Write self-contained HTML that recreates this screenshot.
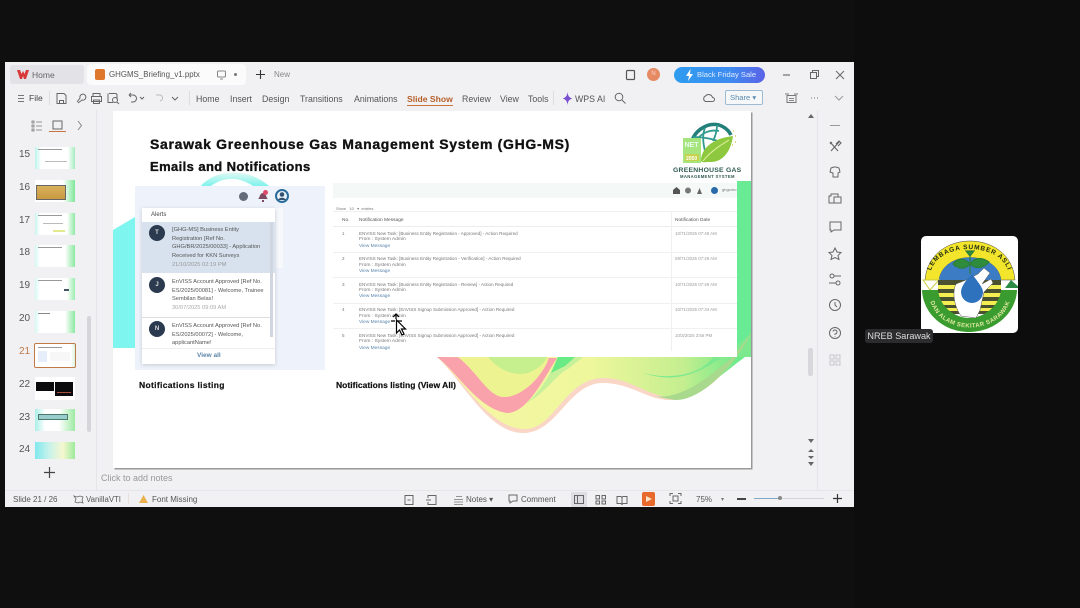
<!DOCTYPE html>
<html><head><meta charset="utf-8"><style>
html,body{margin:0;padding:0;background:#0f0f10;width:1080px;height:608px;overflow:hidden}
body{font-family:"Liberation Sans",sans-serif;position:relative}
div{position:absolute;white-space:nowrap}
svg{position:absolute;overflow:visible}
#root{left:0;top:0;width:1080px;height:608px;filter:blur(.35px)}
.t{font-size:9.5px;color:#555;line-height:12px}
.m{font-size:9px;color:#444;line-height:12px}
.n{font-size:10px;color:#555;line-height:12px}
.b{font-size:8.8px;color:#555;line-height:12px}
.tx{font-size:4.55px;color:#777;line-height:6px}
.fr{font-size:4.9px;color:#777;line-height:6px}
.lnk{font-size:4.8px;color:#5b86ad;line-height:6px}
.dt{font-size:4.4px;color:#999;line-height:6px}
.al{font-size:5.7px;color:#555;line-height:8.5px}
.av{width:16px;height:16px;border-radius:50%;background:#2b3a4f;color:#ddd;font-size:6px;font-weight:bold;text-align:center;line-height:16px}
.th{left:35px;width:40px;height:22px;background:#fff}
.ic{fill:none;stroke:#555;stroke-width:1}
</style></head><body>
<div id="root">
<div style="left:0;top:0;width:1080px;height:608px;background:#0f0f10"></div>
<div style="left:854px;top:0;width:226px;height:608px;background:#0d0d0e"></div>
<!-- window -->
<div style="left:5px;top:62px;width:849px;height:445px;background:#f1f1f4;overflow:hidden"></div>

<!-- tabs -->
<div style="left:10px;top:65px;width:74px;height:19px;background:#e3e3e7;border-radius:3px"></div>
<svg style="left:17px;top:70px" width="12" height="9"><path d="M0 0h3l1.500 4L6 1l1.500 3L9 0h3L9 9H7L6 6 5 9H3z" fill="#d9383a"/></svg>
<div class="t" style="left:32px;top:69px;font-size:8.500px;color:#666">Home</div>
<div style="left:87px;top:64px;width:159px;height:21px;background:#fbfbfc;border-radius:4px"></div>
<div style="left:95px;top:69px;width:10px;height:11px;background:#e0782c;border-radius:2px"></div>
<div class="t" style="left:109px;top:69px;font-size:7.900px">GHGMS_Briefing_v1.pptx</div>
<svg style="left:216px;top:70px" width="12" height="10"><rect x="1.500" y="1" width="8" height="6" rx="1" fill="none" stroke="#888"/><path d="M4 9h3" fill="none" stroke="#888"/></svg>
<div style="left:234px;top:73px;width:3px;height:3px;border-radius:50%;background:#777"></div>
<svg style="left:255px;top:69px" width="11" height="11"><path d="M5.500 1v9M1 5.500h9" fill="none" stroke="#333" stroke-width="1.100"/></svg>
<div class="t" style="left:274px;top:69px;font-size:8px;color:#888">New</div>
<svg style="left:625px;top:69px" width="12" height="12"><rect x="1.500" y="1.500" width="8" height="9" rx="1" fill="none" stroke="#555" stroke-width="1.200"/></svg>
<div style="left:647px;top:68px;width:13px;height:13px;border-radius:50%;background:#e58a63;color:#f7d4c5;font-size:6px;text-align:center;line-height:13px">N</div>
<div style="left:674px;top:67px;width:91px;height:16px;border-radius:8px;background:linear-gradient(90deg,#2e9df0,#3d8cf0 60%,#5a63e6);color:#dfeaff;font-size:7.600px;line-height:16px;text-indent:23px">Black Friday Sale</div>
<svg style="left:685px;top:69px" width="9" height="12"><path d="M5.500 0L1 7h3L3 12l5-7H5z" fill="#fff"/></svg>
<svg style="left:782px;top:69px" width="62" height="12"><path d="M1 6h7" stroke="#555" fill="none"/><rect x="28.500" y="3.500" width="6" height="6" fill="none" stroke="#666"/><path d="M30.500 3.500v-2h6v6h-2" fill="none" stroke="#666"/><path d="M54 2l8 8M62 2l-8 8" stroke="#666" fill="none"/></svg>

<!-- toolbar -->
<svg style="left:17px;top:94px" width="9" height="9"><path d="M1 1.500h6M1 4.500h6M1 7.500h6" stroke="#777" fill="none"/></svg>
<div class="m" style="left:29px;top:92px;font-size:8.500px">File</div>
<div style="left:49px;top:91px;width:1px;height:14px;background:#ddd"></div>
<svg style="left:56px;top:92px" width="128" height="13" fill="none" stroke="#666"><path d="M1 1.500h7l2 2v8H1zM3.500 11.500v-3h4v3"/><path d="M21 10l3-4a3 3 0 1 1 2 2l-4 3"/><path d="M37 4V1.500h7V4M35.500 4.500h10v5h-10zM37.500 8h6v3.500h-6z"/><path d="M53 1.500h7l1 1v5M52 1.500v9h5"/><circle cx="59" cy="8" r="2.500"/><path d="M61 10l2 2"/><path d="M73 3h4a3 3 0 0 1 0 7h-2M73 3l2-2M73 3l2 2"/><path d="M84 5l2 2 2-2"/><path d="M100 3l3 0a3 3 0 0 1 1 6" stroke="#bbb"/><path d="M116 5l3 3 3-3"/></svg>
<div style="left:189px;top:91px;width:1px;height:14px;background:#ddd"></div>
<div class="b" style="left:196px;top:93px">Home</div>
<div class="b" style="left:230px;top:93px">Insert</div>
<div class="b" style="left:262px;top:93px">Design</div>
<div class="b" style="left:300px;top:93px">Transitions</div>
<div class="b" style="left:354px;top:93px">Animations</div>
<div class="b" style="left:407px;top:93px;color:#b55f2a;font-weight:bold;font-size:8.600px">Slide Show</div>
<div style="left:407px;top:105px;width:46px;height:1px;background:#c8743f"></div>
<div class="b" style="left:462px;top:93px">Review</div>
<div class="b" style="left:500px;top:93px">View</div>
<div class="b" style="left:528px;top:93px">Tools</div>
<div style="left:553px;top:91px;width:1px;height:14px;background:#ddd"></div>
<svg style="left:562px;top:92px" width="11" height="13"><path d="M5.500 0C6 4 7 5.500 10.500 6.500 7 7.500 6 9 5.500 13 5 9 4 7.500.5 6.500 4 5.500 5 4 5.500 0z" fill="#7a4fd0"/></svg>
<div class="b" style="left:575px;top:93px">WPS AI</div>
<svg style="left:614px;top:92px" width="12" height="12" fill="none" stroke="#666"><circle cx="5" cy="5" r="3.800"/><path d="M8 8l3.500 3.500"/></svg>
<svg style="left:702px;top:92px" width="13" height="12" fill="none" stroke="#666"><path d="M3.500 9.500a3 3 0 0 1 0-5.500 4 4 0 0 1 7 1.500 2 2 0 0 1 0 4z"/></svg>
<div style="left:725px;top:90px;width:38px;height:15px;border:1px solid #9dbbd3;border-radius:2px;box-sizing:border-box;font-size:7.600px;line-height:13px;color:#5a8bb0;text-indent:4px;background:#f5f7f9">Share &#9662;</div>
<svg style="left:785px;top:92px" width="62" height="12" fill="none" stroke="#777"><path d="M2 3.500h9v7H2zM0 2h4M9 2h4"/><path d="M4 6.500h5M4 8.500h5" stroke="#888"/><path d="M26 6h1M29 6h1M32 6h1"/><path d="M50 4l4 4 4-4" stroke="#999"/></svg>

<!-- left rail -->
<div style="left:96px;top:110px;width:1px;height:380px;background:#e6e6ea"></div>
<svg style="left:31px;top:119px" width="60" height="14" fill="none" stroke="#777"><path d="M1 2h2v2H1zM1 6h2v2H1zM1 10h2v2H1zM5 3h6M5 7h6M5 11h6" stroke-width=".8"/><rect x="22" y="2" width="9" height="8" stroke="#666"/><path d="M47 2l3.500 4.500L47 11" stroke="#888"/></svg>
<div style="left:49px;top:131px;width:17px;height:1px;background:#c8743f"></div>
<div class="n" style="left:19px;top:149px">15</div>
<div class="n" style="left:19px;top:182px">16</div>
<div class="n" style="left:19px;top:215px">17</div>
<div class="n" style="left:19px;top:247px">18</div>
<div class="n" style="left:19px;top:280px">19</div>
<div class="n" style="left:19px;top:313px">20</div>
<div class="n" style="left:19px;top:346px;color:#c07a48">21</div>
<div class="n" style="left:19px;top:379px">22</div>
<div class="n" style="left:19px;top:412px">23</div>
<div class="n" style="left:19px;top:444px">24</div>

<div class="th" style="top:147px;background:linear-gradient(90deg,#bdf3ec 0,#fff 16%,#fff 82%,#a6ecc0 100%)"><div style="left:3px;top:2px;width:24px;height:1px;background:#999"></div><div style="left:10px;top:14px;width:22px;height:1px;background:#bbb"></div></div>
<div class="th" style="top:180px;background:linear-gradient(90deg,#fff 70%,#7fe79a 100%)"><div style="left:1px;top:5px;width:28px;height:13px;background:linear-gradient(180deg,#d9b15c,#c99a40);border:1px solid #666"></div></div>
<div class="th" style="top:213px;background:linear-gradient(90deg,#c6f5ee 0,#fff 12%,#fff 80%,#8fe9a6 100%)"><div style="left:3px;top:2px;width:24px;height:1px;background:#999"></div><div style="left:8px;top:10px;width:20px;height:1px;background:#bbb"></div><div style="left:18px;top:17px;width:12px;height:2px;background:#e2e88e"></div></div>
<div class="th" style="top:245px;background:linear-gradient(90deg,#d3f7f1 0,#fff 12%,#fff 75%,#8be8a2 100%)"><div style="left:3px;top:2px;width:24px;height:1px;background:#999"></div></div>
<div class="th" style="top:278px;background:linear-gradient(90deg,#d3f7f1 0,#fff 12%,#fff 80%,#9cecb0 100%)"><div style="left:3px;top:2px;width:24px;height:1px;background:#999"></div><div style="left:29px;top:11px;width:5px;height:2px;background:#456"></div></div>
<div class="th" style="top:311px;background:linear-gradient(90deg,#d3f7f1 0,#fff 12%,#fff 75%,#8be8a2 100%)"><div style="left:3px;top:2px;width:12px;height:1px;background:#888"></div></div>
<div class="th" style="left:33.500px;top:343px;width:40px;height:23px;border:1.500px solid #c07a48;box-sizing:content-box;border-radius:2px;background:linear-gradient(90deg,#fff 90%,#d6f4dc 100%)"><div style="left:3px;top:3px;width:24px;height:1px;background:#999"></div><div style="left:3px;top:7px;width:9px;height:11px;background:#e6eefb"></div><div style="left:15px;top:8px;width:20px;height:9px;background:#f7f7f7"></div></div>
<div class="th" style="top:377px;height:23px"><div style="left:1px;top:5px;width:18px;height:9px;background:#0b0b0d"></div><div style="left:20px;top:5px;width:18px;height:14px;background:#0b0b0d"></div><div style="left:22px;top:15px;width:14px;height:1px;background:#a85040"></div></div>
<div class="th" style="top:409px;background:linear-gradient(90deg,#a8efe6 0,#fff 25%,#fff 60%,#9eeaa4 100%)"><div style="left:3px;top:5px;width:28px;height:4px;background:#9cc;border:1px solid #4a7a6c"></div></div>
<div class="th" style="top:442px;height:17px;background:linear-gradient(90deg,#7fe8ee 0,#c7f2ea 35%,#f6f7cf 70%,#9cea9c 100%)"></div>
<div style="left:87px;top:316px;width:4px;height:116px;background:#d6d6da;border-radius:2px"></div>
<svg style="left:44px;top:467px" width="11" height="11"><path d="M5.500 0v11M0 5.500h11" stroke="#444" stroke-width="1.200"/></svg>

<!-- slide -->
<div style="left:113px;top:111px;width:638px;height:357px;background:#fff;box-shadow:1.500px 1.500px 0 #999;overflow:hidden">
  <svg style="left:0;top:0" width="638" height="357">
    <defs>
      <linearGradient id="w" x1="0" x2="1" y1="0" y2="0"><stop offset="0" stop-color="#f7f6a6"/><stop offset=".5" stop-color="#eef79b"/><stop offset=".8" stop-color="#c4ee8f"/><stop offset="1" stop-color="#66e98a"/></linearGradient>
      <linearGradient id="arc" x1="0" x2="0" y1="0" y2="1"><stop offset="0" stop-color="#dff9f3"/><stop offset="1" stop-color="#7ff2ec"/></linearGradient>
    </defs>
    <path d="M0 119L22 106V237H0z" fill="#7ff5ef"/>
    <path d="M88 75C102 58 135 56 156 75H140C125 65 110 66 98 75z" fill="url(#arc)"/>
    <path d="M624 70H638V240H624z" fill="#68eb94"/>
    <!-- outer cream wave -->
    <path d="M324 246C350 270 375 322 410 322C445 322 455 272 490 272C520 272 535 291 562 289C590 285 612 268 638 222V246z" fill="#f9d6c6"/>
    <path d="M324 246C350 268 375 316 410 318C442 320 450 268 490 267C520 267 535 287 562 286C590 283 610 262 632 246z" fill="url(#w)"/>
    <!-- pink band -->
    <path d="M324 246C345 262 365 298 394 302C414 302 430 269 444 247z" fill="#f9a2ac"/>
    <path d="M345 246C365 262 375 285 390 286C405 287 424 272 434 252L436 246z" fill="#eef392"/>
    <path d="M375 246C385 258 400 266 415 262C425 258 432 252 434 246z" fill="#c6ef8e"/>
    <path d="M444 247C436 268 425 282 414 292C432 282 445 262 455 258L470 246z" fill="#c6f09a"/>
    <path d="M445 246L438 262 452 255 462 246z" fill="#68ea84"/>
    <path d="M530 262C560 272 590 268 638 222V246L600 246C590 262 560 270 530 262z" fill="#7de98f"/>
    <path d="M540 285C570 290 600 262 620 246L638 222C625 250 590 290 562 289z" fill="#a8d98c"/>
  </svg>
  <div style="left:37px;top:25px;font-size:14px;font-weight:bold;color:#111;letter-spacing:.68px;line-height:17px;-webkit-text-stroke:.35px #111">Sarawak Greenhouse Gas Management System (GHG-MS)</div>
  <div style="left:37px;top:48px;font-size:13px;font-weight:bold;color:#111;letter-spacing:.4px;line-height:16px;-webkit-text-stroke:.35px #111">Emails and Notifications</div>

  <!-- logo -->
  <svg style="left:570px;top:12px" width="56" height="40" viewBox="0 0 56 40">
    <path d="M8 22C10 8 24-1 36 2 42 4 46 8 48 12" fill="none" stroke="#237f7a" stroke-width="3.500"/>
    <path d="M12 20C16 11 26 6 36 8M22 5C19 12 20 20 22 28M34 2C34 8 33 12 30 18M10 14C20 14 32 16 42 21" fill="none" stroke="#2f9a8e" stroke-width="1.800"/>
    <path d="M18 38C18 24 32 15 50 13 48 28 40 40 26 39 22 39 20 40 18 38z" fill="#8ec83e"/>
    <path d="M20 38C28 28 38 22 46 17" stroke="#dff0a0" stroke-width="1" fill="none"/>
    <rect x="0" y="15" width="18" height="25" fill="#a6e47e"/>
    <rect x="2" y="31" width="14" height="7" fill="#c6d24c"/>
    <text x="1.500" y="24" font-size="7" font-weight="bold" fill="#e9fff0" font-family="Liberation Sans">NET</text>
    <text x="3" y="37" font-size="5" font-weight="bold" fill="#fff" font-family="Liberation Sans">2050</text>
    <path d="M50 8h1M52 13h1M52 19h1M49 22h1" stroke="#d6c65a" stroke-width="1.500"/>
  </svg>
  <div style="left:560px;top:55px;font-size:6.800px;font-weight:bold;color:#2e5a50;letter-spacing:.25px;line-height:9px">GREENHOUSE GAS</div>
  <div style="left:567px;top:63px;font-size:4.200px;font-weight:bold;color:#2e5a50;letter-spacing:.35px;line-height:6px">MANAGEMENT SYSTEM</div>

  <!-- left panel -->
  <div style="left:22px;top:75px;width:190px;height:184px;background:#eef3fb"></div>
  <div style="left:125.500px;top:81px;width:9px;height:9px;border-radius:50%;background:#636c78"></div>
  <svg style="left:144px;top:79px" width="12" height="12"><path d="M1 9C3 8 2.500 3 6 3s3 5 5 6zM5 10h2v2H5z" fill="#7b4a62"/><circle cx="8.500" cy="2.500" r="2.500" fill="#e04a6a"/></svg>
  <div style="left:162px;top:78px;width:14px;height:14px;border-radius:50%;background:#eaf2f8;border:2px solid #2a6d9c;box-sizing:border-box"></div>
  <svg style="left:164px;top:80px" width="10" height="10"><circle cx="5" cy="3.500" r="2.300" fill="#33506e"/><path d="M1 9c1-3 7-3 8 0z" fill="#33506e"/></svg>
  <div style="left:29px;top:97px;width:141px;height:60px;background:#f6f8fc"></div>
  <div style="left:29px;top:97px;width:133px;height:156px;background:#fff;box-shadow:0 1px 4px #c6c9cf;overflow:hidden">
    <div class="al" style="left:9px;top:3px;font-size:6px;color:#444">Alerts</div>
    <div style="left:0;top:14px;width:133px;height:51px;background:#d7e2ee"></div>
    <div class="av" style="left:7px;top:17px">T</div>
    <div class="al" style="left:30px;top:18px">[GHG-MS] Business Entity<br>Registration [Ref No.<br>GHG/BR/2025/00033] - Application<br>Received for KKN Surveys</div>
    <div class="al" style="left:30px;top:53px;color:#999">21/10/2025 02:19 PM</div>
    <div class="av" style="left:7px;top:69px">J</div>
    <div class="al" style="left:30px;top:70px">EnVISS Account Approved [Ref No.<br>ES/2025/00081] - Welcome, Trainee<br>Sembilan Belas!</div>
    <div class="al" style="left:30px;top:96px;color:#aaa">30/07/2025 09:09 AM</div>
    <div style="left:0;top:109px;width:128px;height:1px;background:#ddd"></div>
    <div class="av" style="left:7px;top:113px">N</div>
    <div class="al" style="left:30px;top:114px">EnVISS Account Approved [Ref No.<br>ES/2025/00072] - Welcome,<br>applicantName!</div>
    <div style="left:0;top:140px;width:133px;height:16px;background:#fff;border-top:1px solid #eee"></div>
    <div style="left:55px;top:144px;font-size:6.500px;font-weight:bold;color:#5c84a8;line-height:8px">View all</div>
    <div style="left:128px;top:14px;width:3px;height:115px;background:#cfd6df"></div>
  </div>
  <div style="left:26px;top:269px;font-size:8.500px;font-weight:bold;color:#111;letter-spacing:.33px;line-height:11px;-webkit-text-stroke:.2px #111">Notifications listing</div>

  <!-- right panel -->
  <div style="left:220px;top:72px;width:404px;height:174px;background:#fff"></div>
  <div style="left:220px;top:72px;width:404px;height:15px;background:#f4f9f8"></div>
  <svg style="left:560px;top:75px" width="64" height="10"><path d="M0 4l3.500-3L7 4v4H0z" fill="#555"/><circle cx="15" cy="4.500" r="3" fill="#777"/><path d="M24 8l2.500-6L29 8z" fill="#666"/><circle cx="41.500" cy="4.500" r="3.500" fill="#2a6aa8"/></svg>
  <div class="tx" style="left:609px;top:76px;font-size:4px">ghgcreo</div>
  <div class="tx" style="left:223px;top:95px;font-size:4px">Show&nbsp;&nbsp;&nbsp;10&nbsp;&nbsp;&nbsp;&#9662;&nbsp;&nbsp;entries</div>
  <div style="left:220px;top:100px;width:404px;height:1px;background:#f0f0f0"></div>
  <div class="tx" style="left:229px;top:107px;color:#555;font-size:4.800px">No.</div>
  <div class="tx" style="left:246px;top:107px;color:#555;font-size:4.800px">Notification Message</div>
  <div class="tx" style="left:562px;top:107px;color:#555;font-size:4.800px">Notification Date</div>
  <div style="left:220px;top:115px;width:404px;height:1px;background:#ececec"></div>
  <div style="left:558px;top:100px;width:1px;height:140px;background:#f0f0f0"></div>

  <div class="tx" style="left:229px;top:120px">1</div>
  <div class="tx" style="left:246px;top:120px">ENVISS New Task: [Business Entity Registration - Approved] - Action Required</div>
  <div class="fr" style="left:246px;top:126px">From : System Admin</div>
  <div class="lnk" style="left:246px;top:133px">View Message</div>
  <div class="dt" style="left:562px;top:120px">10/71/2025 07:49 AM</div>
  <div style="left:220px;top:141px;width:404px;height:1px;background:#f0f0f0"></div>

  <div class="tx" style="left:229px;top:145px">2</div>
  <div class="tx" style="left:246px;top:145px">ENVISS New Task: [Business Entity Registration - Verification] - Action Required</div>
  <div class="fr" style="left:246px;top:152px">From : System Admin</div>
  <div class="lnk" style="left:246px;top:158px">View Message</div>
  <div class="dt" style="left:562px;top:145px">09/71/2025 07:49 AM</div>
  <div style="left:220px;top:166px;width:404px;height:1px;background:#f0f0f0"></div>

  <div class="tx" style="left:229px;top:171px">3</div>
  <div class="tx" style="left:246px;top:171px">ENVISS New Task: [Business Entity Registration - Review] - Action Required</div>
  <div class="fr" style="left:246px;top:177px">From : System Admin</div>
  <div class="lnk" style="left:246px;top:183px">View Message</div>
  <div class="dt" style="left:562px;top:171px">10/71/2025 07:49 AM</div>
  <div style="left:220px;top:192px;width:404px;height:1px;background:#f0f0f0"></div>

  <div class="tx" style="left:229px;top:196px">4</div>
  <div class="tx" style="left:246px;top:196px">ENVISS New Task: [EnVISS Signup Submission Approved] - Action Required</div>
  <div class="fr" style="left:246px;top:203px">From : System Admin</div>
  <div class="lnk" style="left:246px;top:209px">View Message</div>
  <div class="dt" style="left:562px;top:196px">10/71/2025 07:34 AM</div>
  <div style="left:220px;top:217px;width:404px;height:1px;background:#f0f0f0"></div>

  <div class="tx" style="left:229px;top:222px">5</div>
  <div class="tx" style="left:246px;top:222px">ENVISS New Task: [EnVISS Signup Submission Approved] - Action Required</div>
  <div class="fr" style="left:246px;top:228px">From : System Admin</div>
  <div class="lnk" style="left:246px;top:235px">View Message</div>
  <div class="dt" style="left:562px;top:222px">10/3/2025 3:56 PM</div>

  <div style="left:223px;top:269px;font-size:8.500px;font-weight:bold;color:#111;letter-spacing:.03px;line-height:11px;-webkit-text-stroke:.2px #111">Notifications listing (View All)</div>
</div>

<!-- cursor -->
<svg style="left:391px;top:314px" width="16" height="22"><path d="M5.500 6L5.500 19 8.500 16 11 21 13 20 10.500 15 14.500 15z" fill="#fff" stroke="#000" stroke-width="1.200"/><path d="M5 0v5M2 3l3-3 3 3M0 7h4M7 7h4" stroke="#000" stroke-width="1.200" fill="none"/></svg>

<!-- right scrollbar & rail -->
<div style="left:817px;top:110px;width:1px;height:380px;background:#e4e4e8"></div>
<div style="left:808px;top:348px;width:5px;height:28px;background:#d8d8dc;border-radius:2px"></div>
<svg style="left:807px;top:113px" width="8" height="6"><path d="M1 5l3-4 3 4z" fill="#666"/></svg>
<svg style="left:807px;top:438px" width="8" height="28" fill="#666"><path d="M1 1h6L4 5zM1 14l3-3 3 3zM1 18l3 3 3-3"/><path d="M1 24h6L4 28z"/></svg>
<svg style="left:828px;top:118px" width="14" height="250" fill="none" stroke="#666">
  <path d="M2 7.500h10" stroke="#999"/>
  <path d="M2 24l8 9M11 24l-8 9M8 26l3-3 2 2-3 3M2 26l2-2" stroke-width="1.100"/>
  <path d="M3 50l3-1h2l3 1 1 4-2 1v4H5v-4l-3-1z"/>
  <path d="M3 76h7v3H6v6H1v-7h2zM6 79h7v6H6"/>
  <path d="M2 104h11v8H6l-3 2v-2H2z"/>
  <path d="M7 130l2 4 4 .5-3 3 1 4-4-2-4 2 1-4-3-3 4-.5z"/>
  <circle cx="4" cy="158" r="2"/><path d="M6 158h7M1 165h7"/><circle cx="10" cy="165" r="2"/>
  <circle cx="7" cy="187" r="5.500"/><path d="M7 184v3l2 2"/>
  <circle cx="7" cy="215" r="5.500"/><path d="M5 213.500a2 2 0 1 1 2 2.500v1M7 218.500v.5"/>
  <path d="M2 237h4v4H2zM8 237h4v4H8zM2 243h4v4H2zM8 243h4v4H8z" stroke="#c8c8cc"/>
</svg>

<!-- notes -->
<div class="n" style="left:101px;top:472px;font-size:9px;color:#999">Click to add notes</div>
<div style="left:5px;top:490px;width:849px;height:1px;background:#e6e6ea"></div>

<!-- status -->
<div class="m" style="left:13px;top:494px;font-size:8px;color:#555">Slide 21 / 26</div>
<svg style="left:73px;top:494px" width="11" height="11" fill="none" stroke="#666"><path d="M1 2l3 1 3-1 3 1-1 3 1 3-3-1-2 1-3-1 1-3z" stroke-width=".8"/></svg>
<div class="m" style="left:86px;top:494px;font-size:7.800px;color:#555">VanillaVTI</div>
<div style="left:128px;top:493px;width:1px;height:11px;background:#ece0dc"></div>
<svg style="left:139px;top:495px" width="9" height="9"><path d="M4.500 0L9 8H0z" fill="#e9b04d"/></svg>
<div class="m" style="left:152px;top:494px;font-size:8px;color:#555">Font Missing</div>
<svg style="left:404px;top:494px" width="33" height="12" fill="none" stroke="#666"><rect x="1" y="1.500" width="8" height="9"/><path d="M3.500 6h3"/><path d="M24 4V1.500h8v9h-8V8M22 6h5"/></svg>
<svg style="left:454px;top:495px" width="10" height="10" fill="none" stroke="#777"><path d="M2 1.500h6M0 4.500h9M0 7h9M0 9.500h9" stroke-width=".8"/></svg>
<div class="m" style="left:466px;top:494px;font-size:8px;color:#555">Notes &#9662;</div>
<svg style="left:508px;top:494px" width="10" height="11" fill="none" stroke="#666"><path d="M1 1h8v6H5l-3 2V7H1z"/></svg>
<div class="m" style="left:521px;top:494px;font-size:8px;color:#555">Comment</div>
<div style="left:571px;top:492px;width:16px;height:15px;background:#dfdfe3"></div>
<svg style="left:574px;top:495px" width="62" height="10" fill="none" stroke="#666"><rect x=".5" y=".5" width="9" height="8"/><path d="M3.500 .5v8"/><path d="M22 .5h3.500v3.500H22zM28 .5h3.500v3.500H28zM22 6h3.500v3H22zM28 6h3.500v3H28z"/><path d="M43 1.500h4l1 1 1-1h4v7h-4l-1 1-1-1h-4zM48 2.500v6"/></svg>
<div style="left:642px;top:492px;width:13px;height:14px;background:#e8692c;border-radius:2px"></div>
<svg style="left:646px;top:496px" width="6" height="6"><path d="M0 0l6 3-6 3z" fill="#fde6c6"/></svg>
<svg style="left:670px;top:493px" width="11" height="11" fill="none" stroke="#666"><path d="M0 3V.5h3M8 .5h3V3M11 8v2.500H8M3 10.500H0V8"/><rect x="3" y="3" width="5" height="5"/></svg>
<div class="m" style="left:696px;top:494px;font-size:8px;color:#555">75%</div>
<div style="left:721px;top:497px;font-size:6px;line-height:6px;color:#777">&#9662;</div>
<div style="left:737px;top:498px;width:9px;height:1.500px;background:#444"></div>
<div style="left:754px;top:498px;width:70px;height:1px;background:#d6d6da"></div>
<div style="left:754px;top:498px;width:26px;height:1px;background:#7ea9c9"></div>
<div style="left:778px;top:496px;width:4px;height:4px;border-radius:50%;background:#888"></div>
<svg style="left:833px;top:494px" width="9" height="9"><path d="M4.500 0v9M0 4.500h9" stroke="#333" stroke-width="1.200"/></svg>

<!-- participant logo -->
<div style="left:921px;top:236px;width:97px;height:97px;background:#fff;border-radius:5px;overflow:hidden">
<svg width="97" height="97" viewBox="0 0 97 97" style="left:0;top:0">
  <defs>
    <path id="arcT" d="M9 40C12 4 85 4 88 40"/>
    <path id="arcB" d="M8 60C14 102 84 102 90 60"/>
  </defs>
  <!-- yellow band -->
  <path d="M4 44C8 -8 90 -8 94 44H80C76 14 22 14 18 44z" fill="#f2e52c" stroke="#444" stroke-width=".5"/>
  <!-- blue sky -->
  <path d="M18 44C22 14 76 14 80 44z" fill="#3b7cc4"/>
  <path d="M2 44H18L9 54z" fill="#fff" stroke="#c9c93a" stroke-width="1"/>
  <path d="M84 52L90 44 99 52z" fill="#2d8a45"/>
  <!-- stripes -->
  <rect x="17" y="44" width="63" height="34" fill="#4a5130"/>
  <rect x="17" y="49" width="63" height="4" fill="#f4ee52"/>
  <rect x="17" y="57" width="63" height="4" fill="#f4ee52"/>
  <rect x="17" y="65" width="63" height="4" fill="#f4ee52"/>
  <rect x="17" y="72" width="63" height="3" fill="#f4ee52"/>
  <!-- green base -->
  <path d="M1 54H17C19 72 35 82 48 82S78 72 80 54H96C95 78 73 96 48 96S2 78 1 54z" fill="#3a9c2f"/>
  <g transform="translate(3,2)">
    <path d="M37 78C30 68 28 54 32 46L42 42 54 36 60 30 66 35 58 46 67 41 69 45 60 54 56 72 52 80z" fill="#fff" stroke="#555" stroke-width=".5"/>
    <path d="M48 36C40 44 37 50 37 54A11 11 0 0 0 59 54C59 50 54 44 48 36z" fill="#2e72bd"/>
  </g>
  <path d="M49 38V18M49 28C42 20 36 23 32 28 38 34 45 33 49 28zM49 28C55 20 62 22 68 26 62 33 54 33 49 28zM49 20L45 15H53z" stroke="#2e7e3a" stroke-width="1.200" fill="#2e8c3c"/>
  <text font-size="6.500" font-weight="bold" fill="#1d2a10" font-family="Liberation Sans" letter-spacing=".8" text-anchor="middle"><textPath href="#arcT" startOffset="50%">LEMBAGA SUMBER ASLI</textPath></text>
  <text font-size="6" font-weight="bold" fill="#dfe8a0" font-family="Liberation Sans" letter-spacing=".4" text-anchor="middle"><textPath href="#arcB" startOffset="50%">DAN ALAM SEKITAR SARAWAK</textPath></text>
</svg>
</div>
<div style="left:865px;top:329px;width:68px;height:14px;background:#2c2c2e;border-radius:3px;color:#dcdcdc;font-size:9.100px;line-height:14px;text-align:center">NREB Sarawak</div>
</div>
</body></html>
